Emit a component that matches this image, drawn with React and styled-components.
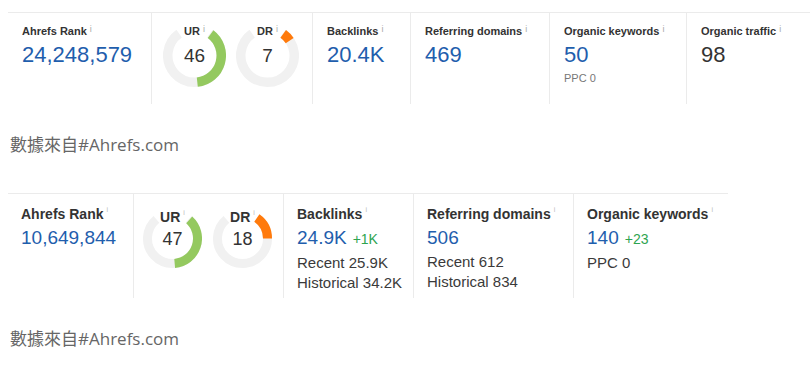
import React from "react";
import styled, { createGlobalStyle } from "styled-components";

const GlobalStyle = createGlobalStyle`
  html, body {
    margin: 0;
    padding: 0;
    background: #fff;
  }
  body {
    font-family: "Liberation Sans", Arial, sans-serif;
    color: #333;
  }
`;

const Page = styled.div`
  padding: 12px 0 0 8px;
  overflow: hidden;
`;

const Panel = styled.div`
  display: flex;
  border-top: 1px solid #ebebeb;
  width: ${(p) => (p.$width ? `${p.$width}px` : "auto")};
`;

const Cell = styled.div`
  box-sizing: border-box;
  flex: ${(p) => (p.$w ? `0 0 ${p.$w}px` : "1 1 auto")};
  min-height: ${(p) => (p.$compact ? 104 : 91)}px;
  padding: ${(p) => (p.$compact ? "11px 0 0 13px" : "10px 0 0 14px")};
  border-right: ${(p) => (p.$last ? "none" : "1px solid #ebebeb")};
`;

const DonutCell = styled(Cell)`
  display: flex;
  align-items: flex-start;
  gap: ${(p) => (p.$compact ? 11 : 10)}px;
  padding: ${(p) => (p.$compact ? "15px 0 0 9px" : "11px 0 0 11px")};
`;

const Label = styled.div`
  font-size: ${(p) => (p.$compact ? 14 : 11)}px;
  line-height: ${(p) => (p.$compact ? 18 : 16)}px;
  font-weight: bold;
  color: #333;
  white-space: nowrap;
`;

const Info = styled.span`
  font-size: ${(p) => (p.$compact ? 7 : 9)}px;
  font-weight: normal;
  color: ${(p) => (p.$compact ? "#bbb" : "#aaa")};
  vertical-align: text-top;
  line-height: 1;
  margin-left: 3px;
`;

const Value = styled.div`
  margin-top: 3px;
  font-size: ${(p) => (p.$compact ? 19 : 22)}px;
  line-height: ${(p) => (p.$compact ? 24 : 26)}px;
  color: ${(p) => (p.$plain ? "#333" : "#1f5ead")};
  white-space: nowrap;
`;

const Delta = styled.span`
  margin-left: 6px;
  font-size: 14px;
  color: #2ea44f;
`;

const Sub = styled.div`
  margin-top: ${(p) => (p.$first ? 2 : 0)}px;
  font-size: ${(p) => (p.$compact ? 15 : 11)}px;
  line-height: ${(p) => (p.$compact ? 20 : 16)}px;
  color: ${(p) => (p.$compact ? "#3a3a3a" : "#777")};
  white-space: nowrap;
`;

const Source = styled.p`
  margin: 29px 0 36px;
  padding-left: 2px;
  font-family: "Open Sans", "Noto Sans CJK TC", sans-serif;
  font-size: 17px;
  line-height: 24px;
  color: #666;
`;

const Ring = styled.div`
  display: grid;
  width: ${(p) => p.$size}px;
  height: ${(p) => p.$size}px;
  & > * {
    grid-area: 1 / 1;
  }
  svg {
    display: block;
  }
`;

const RingLabel = styled.div`
  align-self: start;
  justify-self: center;
  font-size: ${(p) => (p.$compact ? 14 : 11)}px;
  line-height: ${(p) => (p.$compact ? 12 : 14)}px;
  font-weight: bold;
  color: #333;
  white-space: nowrap;
`;

const RingValue = styled.div`
  place-self: center;
  font-size: ${(p) => (p.$compact ? 18 : 19)}px;
  line-height: 1;
  color: #333;
`;

const polar = (c, r, deg) => {
  const a = (deg * Math.PI) / 180;
  return [c + r * Math.sin(a), c - r * Math.cos(a)];
};

const arc = (c, r, a1, a2) => {
  const [x1, y1] = polar(c, r, a1);
  const [x2, y2] = polar(c, r, a2);
  const large = a2 - a1 > 180 ? 1 : 0;
  return `M ${x1} ${y1} A ${r} ${r} 0 ${large} 1 ${x2} ${y2}`;
};

function Donut({ size, thickness, label, value, from, to, color, gap, compact }) {
  const c = size / 2;
  const r = c - thickness / 2;
  return (
    <Ring $size={size}>
      <svg width={size} height={size}>
        <path d={arc(c, r, gap, 360 - gap)} stroke="#f1f1f1" strokeWidth={thickness} fill="none" />
        <path d={arc(c, r, from, to)} stroke={color} strokeWidth={thickness} fill="none" />
      </svg>
      <RingLabel $compact={compact}>
        {label}
        <Info $compact={compact}>i</Info>
      </RingLabel>
      <RingValue $compact={compact}>{value}</RingValue>
    </Ring>
  );
}

const GREEN = "#94c95f";
const ORANGE = "#ff7a0c";

function Metric({ w, last, compact, label, value, delta, plain, subs = [] }) {
  return (
    <Cell $w={w} $last={last} $compact={compact}>
      <Label $compact={compact}>
        {label}
        <Info $compact={compact}>i</Info>
      </Label>
      <Value $compact={compact} $plain={plain}>
        {value}
        {delta && <Delta>{delta}</Delta>}
      </Value>
      {subs.map((s, i) => (
        <Sub key={s} $compact={compact} $first={i === 0}>
          {s}
        </Sub>
      ))}
    </Cell>
  );
}

export default function App() {
  return (
    <Page>
      <GlobalStyle />
      <Panel>
        <Metric w={144} label="Ahrefs Rank" value="24,248,579" />
        <DonutCell $w={161}>
          <Donut size={63} thickness={9.5} label="UR" value="46" gap={35} from={37} to={174} color={GREEN} />
          <Donut size={63} thickness={9.5} label="DR" value="7" gap={35} from={36} to={56} color={ORANGE} />
        </DonutCell>
        <Metric w={98} label="Backlinks" value="20.4K" />
        <Metric w={139} label="Referring domains" value="469" />
        <Metric w={137} label="Organic keywords" value="50" subs={["PPC 0"]} />
        <Metric last label="Organic traffic" value="98" plain />
      </Panel>
      <Source>數據來自#Ahrefs.com</Source>

      <Panel $width={720}>
        <Metric compact w={126} label="Ahrefs Rank" value="10,649,844" />
        <DonutCell $w={150} $compact>
          <Donut compact size={59} thickness={9} label="UR" value="47" gap={40} from={42} to={175} color={GREEN} />
          <Donut compact size={59} thickness={9} label="DR" value="18" gap={40} from={35} to={90} color={ORANGE} />
        </DonutCell>
        <Metric compact w={130} label="Backlinks" value="24.9K" delta="+1K" subs={["Recent 25.9K", "Historical 34.2K"]} />
        <Metric compact w={160} label="Referring domains" value="506" subs={["Recent 612", "Historical 834"]} />
        <Metric compact w={155} last label="Organic keywords" value="140" delta="+23" subs={["PPC 0"]} />
      </Panel>
      <Source>數據來自#Ahrefs.com</Source>
    </Page>
  );
}
